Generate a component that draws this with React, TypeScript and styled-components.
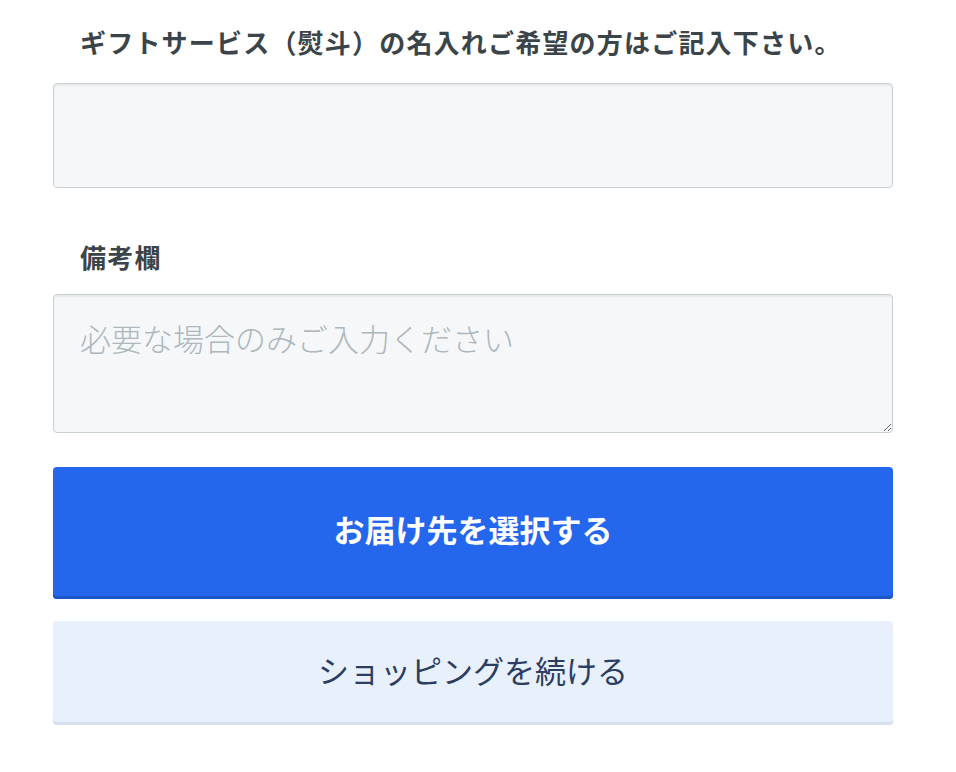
import React from "react";
import styled, { createGlobalStyle } from "styled-components";

const Global = createGlobalStyle`
  html, body { margin: 0; padding: 0; background: #ffffff; }
  body { font-family: "Noto Sans CJK JP", "Noto Sans", sans-serif; }
`;

const Form = styled.div`
  width: 840px;
  padding: 24px 0 0 53px;
  display: flex;
  flex-direction: column;
`;

const Field = styled.div<{ $gap?: number }>`
  display: flex;
  flex-direction: column;
  margin-bottom: ${(p) => p.$gap ?? 0}px;
`;

const Label = styled.label<{ $space: number }>`
  padding-left: 27px;
  font-size: 26px;
  font-weight: 700;
  letter-spacing: 1.2px;
  line-height: 36px;
  color: #3b4448;
  margin-bottom: ${(p) => p.$space}px;
  white-space: nowrap;
`;

const TextInput = styled.input`
  box-sizing: border-box;
  width: 100%;
  height: 105px;
  border: 1px solid #c9d0d4;
  border-radius: 4px;
  background: #f5f7f8;
  box-shadow: inset 0 2px 2px rgba(0, 0, 0, 0.06);
  outline: none;
  padding: 0 26px;
  font-size: 30px;
  font-family: inherit;
`;

const TextArea = styled.textarea`
  box-sizing: border-box;
  width: 100%;
  height: 139px;
  border: 1px solid #c9d0d4;
  border-radius: 4px;
  background: #f5f7f8;
  box-shadow: inset 0 2px 2px rgba(0, 0, 0, 0.06);
  outline: none;
  padding: 18px 26px;
  font-size: 31px;
  line-height: 50px;
  font-family: inherit;
  resize: vertical;
  display: block;
  &::placeholder {
    color: #adb7bd;
    font-weight: 300;
  }
`;

const Button = styled.button<{ $variant: "primary" | "secondary" }>`
  box-sizing: border-box;
  width: 100%;
  border: none;
  border-radius: 4px;
  font-family: inherit;
  display: flex;
  align-items: center;
  justify-content: center;
  cursor: pointer;
  height: ${(p) => (p.$variant === "primary" ? 132 : 104)}px;
  padding: 0 0 ${(p) => (p.$variant === "primary" ? 10 : 7)}px;
  background: ${(p) => (p.$variant === "primary" ? "#2467ec" : "#e8f0fb")};
  color: ${(p) => (p.$variant === "primary" ? "#ffffff" : "#2b3d60")};
  font-size: 31px;
  font-weight: ${(p) => (p.$variant === "primary" ? 700 : 400)};
  box-shadow: ${(p) =>
    p.$variant === "primary"
      ? "inset 0 -3px 0 #1b56c9"
      : "inset 0 -3px 0 #d5dff0"};
  margin-bottom: ${(p) => (p.$variant === "primary" ? 22 : 0)}px;
`;

export default function App() {
  return (
    <>
      <Global />
      <Form>
        <Field $gap={51}>
          <Label $space={23}>ギフトサービス（熨斗）の名入れご希望の方はご記入下さい。</Label>
          <TextInput type="text" />
        </Field>
        <Field $gap={34}>
          <Label $space={19}>備考欄</Label>
          <TextArea placeholder="必要な場合のみご入力ください" />
        </Field>
        <Button $variant="primary">お届け先を選択する</Button>
        <Button $variant="secondary">ショッピングを続ける</Button>
      </Form>
    </>
  );
}
